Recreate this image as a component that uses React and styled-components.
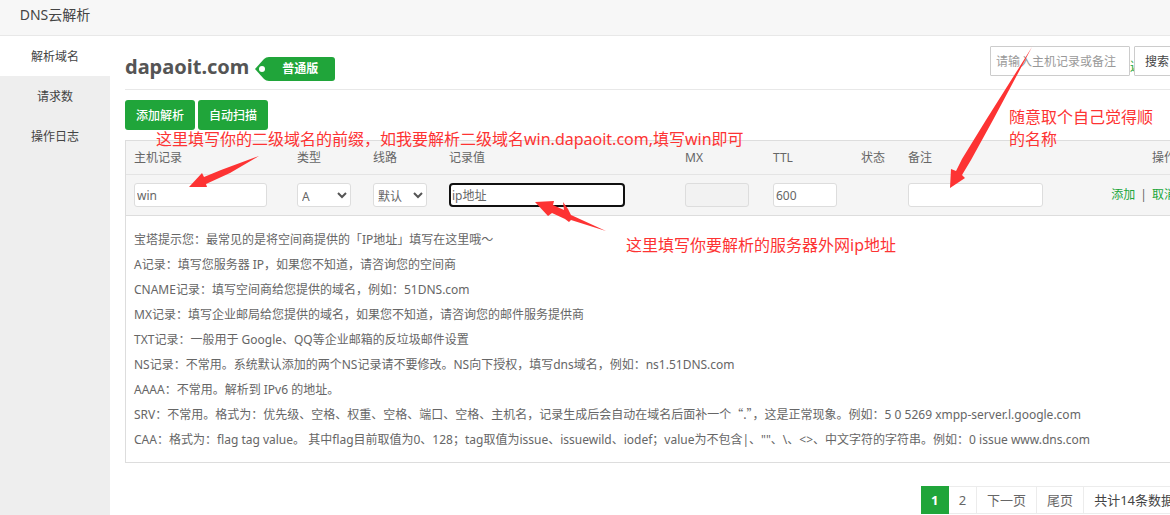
import React from "react";
import styled, { createGlobalStyle } from "styled-components";

const GlobalStyle = createGlobalStyle`
  * {
    box-sizing: border-box;
  }
  body {
    margin: 0;
    overflow: hidden;
    background: #fff;
    color: #666;
    font: 12px/24px "Noto Sans", "Noto Sans CJK SC", sans-serif;
  }
  button, input, select {
    font: inherit;
    color: inherit;
  }
`;

const Page = styled.div`
  position: relative;
  display: flex;
  flex-direction: column;
  min-width: 1200px;
  min-height: 100vh;
`;

const Header = styled.header`
  height: 36px;
  background: #f7f7f7;
  border-bottom: 1px solid #e8e8e8;
`;

const Brand = styled.h1`
  width: 110px;
  margin: 0;
  font-size: 14px;
  font-weight: 400;
  line-height: 30px;
  text-align: center;
  color: #444;
`;

const Body = styled.div`
  display: flex;
  flex: 1;
`;

const Sidebar = styled.nav`
  width: 110px;
  flex-shrink: 0;
  background: #eee;
`;

const NavLink = styled.a`
  display: block;
  height: 40px;
  padding-top: 1px;
  line-height: 40px;
  text-align: center;
  text-decoration: none;
  color: #444;
  background: ${(props) => (props.$active ? "#fff" : "transparent")};
`;

const Main = styled.main`
  flex: 1;
  padding: 0 15px;
`;

const TitleRow = styled.div`
  display: flex;
  align-items: center;
  gap: 6px;
  height: 54px;
  padding-top: 8px;
  border-bottom: 1px solid #e8e8e8;
`;

const Domain = styled.h2`
  margin: 0;
  font-size: 20px;
  color: #555;
`;

const Tag = styled.span`
  position: relative;
  display: inline-flex;
  width: 80px;
  height: 24px;
  margin-top: 4px;
`;

const TagShape = styled.svg`
  position: absolute;
  inset: 0;
`;

const TagText = styled.strong`
  position: relative;
  flex: 1;
  padding-left: 10px;
  line-height: 24px;
  text-align: center;
  color: #fff;
`;

const BackLink = styled.a`
  margin-left: auto;
  padding-right: 7px;
  color: #20a53a;
  text-decoration: none;
`;

const Search = styled.form`
  position: absolute;
  top: 46px;
  right: 20px;
  display: flex;
  gap: 4px;
`;

const SearchInput = styled.input`
  width: 140px;
  height: 30px;
  padding: 0 5px;
  border: 1px solid #ccc;
  border-radius: 1px;
  background: #fff;
  &::placeholder {
    color: #999;
  }
`;

const SearchButton = styled.button`
  height: 30px;
  padding: 1px 10px 0;
  border: 1px solid #ccc;
  border-radius: 1px;
  background: #fff;
  color: #444;
`;

const Actions = styled.div`
  display: flex;
  gap: 3px;
  padding: 10px 0;
`;

const GreenButton = styled.button`
  width: 70px;
  height: 30px;
  padding: 2px 0 0;
  border: 0;
  border-radius: 3px;
  background: #20a53a;
  color: #fff;
  font-weight: 500;
`;

const Panel = styled.section`
  border: 1px solid #ddd;
`;

const RecordTable = styled.table`
  width: 100%;
  table-layout: fixed;
  border-collapse: separate;
  border-spacing: 0;
  background: #f5f5f5;
`;

const Th = styled.th`
  width: ${(props) => props.$width};
  height: 34px;
  padding: 0 8px;
  border-bottom: 1px solid #e4e4e4;
  font-weight: 400;
  text-align: ${(props) => props.$align || "left"};
`;

const Td = styled.td`
  height: 41px;
  padding: 0 8px;
  border-bottom: 1px solid #ddd;
  text-align: ${(props) => props.$align || "left"};
  white-space: nowrap;
`;

const Field = styled.input`
  display: block;
  width: ${(props) => props.$width};
  height: 24px;
  padding: 2px 2px 0;
  border: 1px solid #ddd;
  border-radius: 3px;
  outline: none;
  background: #fff;
  &:disabled {
    background: #f2f2f2;
  }
`;

const FocusedField = styled(Field)`
  border: 2px solid #101010;
  border-radius: 4px;
  padding: 2px 1px 0;
`;

const SelectBox = styled.span`
  position: relative;
  display: block;
  width: 54px;
`;

const Select = styled.select`
  display: block;
  width: 100%;
  height: 24px;
  padding: 1px 4px 0;
  border: 1px solid #ddd;
  border-radius: 3px;
  background: #fff;
  appearance: none;
`;

const Chevron = styled.svg`
  position: absolute;
  top: 9px;
  right: 4px;
  pointer-events: none;
`;

const GreenLink = styled.a`
  color: #20a53a;
  text-decoration: none;
`;

const Divider = styled.span`
  margin: 0 5px;
`;

const Tips = styled.ul`
  margin: 0;
  padding: 11px 8px 10px;
  list-style: none;
  line-height: 25px;
`;

const WideQuote = styled.span`
  font-family: "Noto Sans CJK SC", sans-serif;
  line-height: 1;
`;

const Pager = styled.nav`
  display: flex;
  justify-content: flex-end;
  margin-top: 23px;
  font-size: 13px;
  line-height: 26px;
`;

const PageLink = styled.a`
  min-width: 28px;
  padding: 0 ${(props) => (props.$current ? "9px" : "10px")};
  border: 1px solid ${(props) => (props.$current ? "#20a53a" : "#ececec")};
  border-left-width: ${(props) => (props.$current ? "1px" : "0")};
  background: ${(props) => (props.$current ? "#20a53a" : "#fff")};
  color: ${(props) => (props.$current ? "#fff" : "#666")};
  font-weight: ${(props) => (props.$current ? 700 : 400)};
  text-align: center;
  text-decoration: none;
`;

const Total = styled.span`
  padding: 0 10px;
  border: 1px solid #ececec;
  border-left: 0;
  color: #444;
`;

const Note = styled.p`
  position: absolute;
  left: ${(props) => props.$left};
  top: ${(props) => props.$top};
  width: ${(props) => props.$width || "auto"};
  margin: 0;
  font-size: 16px;
  line-height: 22px;
  color: #fd3333;
  pointer-events: none;
`;

const Arrows = styled.svg`
  position: absolute;
  top: 0;
  left: 0;
  pointer-events: none;
`;

const tips = [
  "宝塔提示您：最常见的是将空间商提供的「IP地址」填写在这里哦～",
  "A记录：填写您服务器 IP，如果您不知道，请咨询您的空间商",
  "CNAME记录：填写空间商给您提供的域名，例如：51DNS.com",
  "MX记录：填写企业邮局给您提供的域名，如果您不知道，请咨询您的邮件服务提供商",
  "TXT记录：一般用于 Google、QQ等企业邮箱的反垃圾邮件设置",
  "NS记录：不常用。系统默认添加的两个NS记录请不要修改。NS向下授权，填写dns域名，例如：ns1.51DNS.com",
  "AAAA：不常用。解析到 IPv6 的地址。",
  <>
    SRV：不常用。格式为：优先级、空格、权重、空格、端口、空格、主机名，记录生成后会自动在域名后面补一个
    <WideQuote>“.”</WideQuote>
    ，这是正常现象。例如：5 0 5269 xmpp-server.l.google.com
  </>,
  "CAA：格式为：flag tag value。 其中flag目前取值为0、128；tag取值为issue、issuewild、iodef；value为不包含|、\"\"、\\、<>、中文字符的字符串。例如：0 issue www.dns.com",
];

const columns = [
  { label: "主机记录", width: "163px" },
  { label: "类型", width: "76px" },
  { label: "线路", width: "76px" },
  { label: "记录值", width: "236px" },
  { label: "MX", width: "88px" },
  { label: "TTL", width: "88px" },
  { label: "状态", width: "47px" },
  { label: "备注", width: "180px" },
  { label: "操作", align: "right" },
];

const Dropdown = ({ label, value }) => (
  <SelectBox>
    <Select aria-label={label} defaultValue={value}>
      <option>{value}</option>
    </Select>
    <Chevron width="10" height="7" viewBox="0 0 10 7">
      <path d="M1 1 L5 5 L9 1" fill="none" stroke="#555" strokeWidth="2" />
    </Chevron>
  </SelectBox>
);

const App = () => {
  return (
    <>
      <GlobalStyle />
      <Page>
        <Header>
          <Brand>DNS云解析</Brand>
        </Header>
        <Body>
          <Sidebar>
            <NavLink href="#domains" $active>解析域名</NavLink>
            <NavLink href="#requests">请求数</NavLink>
            <NavLink href="#logs">操作日志</NavLink>
          </Sidebar>
          <Main>
            <TitleRow>
              <Domain>dapaoit.com</Domain>
              <Tag>
                <TagShape width="80" height="24" viewBox="0 0 80 24">
                  <path
                    d="M0 12 L9 2 Q11 0 14 0 H77 Q80 0 80 3 V21 Q80 24 77 24 H14 Q11 24 9 22 Z"
                    fill="#20a53a"
                  />
                  <circle cx="7" cy="12" r="3" fill="#fff" />
                </TagShape>
                <TagText>普通版</TagText>
              </Tag>
              <BackLink href="#back">返回列表</BackLink>
            </TitleRow>
            <Actions>
              <GreenButton type="button">添加解析</GreenButton>
              <GreenButton type="button">自动扫描</GreenButton>
            </Actions>
            <Panel>
              <RecordTable>
                <thead>
                  <tr>
                    {columns.map((col) => (
                      <Th key={col.label} $width={col.width} $align={col.align}>
                        {col.label}
                      </Th>
                    ))}
                  </tr>
                </thead>
                <tbody>
                  <tr>
                    <Td><Field aria-label="主机记录" $width="133px" defaultValue="win" /></Td>
                    <Td><Dropdown label="类型" value="A" /></Td>
                    <Td><Dropdown label="线路" value="默认" /></Td>
                    <Td><FocusedField aria-label="记录值" $width="176px" defaultValue="ip地址" /></Td>
                    <Td><Field aria-label="MX" $width="64px" disabled /></Td>
                    <Td><Field aria-label="TTL" $width="64px" defaultValue="600" /></Td>
                    <Td />
                    <Td><Field aria-label="备注" $width="135px" /></Td>
                    <Td $align="right">
                      <GreenLink href="#add">添加</GreenLink>
                      <Divider>|</Divider>
                      <GreenLink href="#cancel">取消</GreenLink>
                    </Td>
                  </tr>
                </tbody>
              </RecordTable>
              <Tips>
                {tips.map((tip, i) => (
                  <li key={i}>{tip}</li>
                ))}
              </Tips>
            </Panel>
            <Pager>
              <PageLink href="#1" $current>1</PageLink>
              <PageLink href="#2">2</PageLink>
              <PageLink href="#next">下一页</PageLink>
              <PageLink href="#last">尾页</PageLink>
              <Total>共计14条数据</Total>
            </Pager>
          </Main>
        </Body>
        <Search>
          <SearchInput aria-label="搜索" placeholder="请输入主机记录或备注" />
          <SearchButton type="button">搜索</SearchButton>
        </Search>
        <Arrows width="1200" height="515" viewBox="0 0 1200 515" fill="#fd3333">
          <path d="M259 156 L230 173 L206 184 L207 187 L189 187 L202 173 L204 177 L221 170 Z" />
          <path d="M535 202 L554 201 L553 205 L564 210 L563 202 L568 209 L571 215 L606 231 L571 220 L569 222 L565 219 L552 213 L548 216 Z" />
          <path d="M1032 47 L986 120 L962 159 L956 171 L951 169 L950 188 L965 178 L962 175 L971 160 L993 120 Z" />
        </Arrows>
        <Note $left="156px" $top="128px">
          这里填写你的二级域名的前缀，如我要解析二级域名win.dapaoit.com,填写win即可
        </Note>
        <Note $left="626px" $top="234px">这里填写你要解析的服务器外网ip地址</Note>
        <Note $left="1009px" $top="106px" $width="150px">随意取个自己觉得顺的名称</Note>
      </Page>
    </>
  );
};

export default App;
